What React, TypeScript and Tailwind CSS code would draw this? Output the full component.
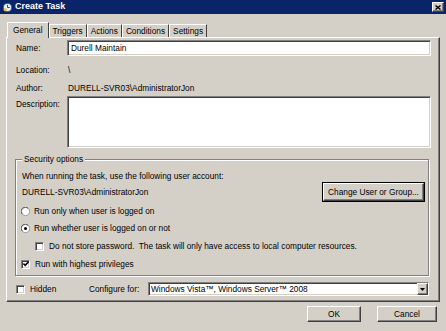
import React from "react";

const sunken =
  "border border-t-[#808080] border-l-[#808080] border-b-white border-r-white shadow-[inset_1px_1px_0_#404040,inset_-1px_-1px_0_#d4d0c8]";
const raised =
  "border border-t-white border-l-white border-b-[#404040] border-r-[#404040] shadow-[inset_-1px_-1px_0_#808080]";

function Radio({ checked }: { checked?: boolean }) {
  return (
    <svg width="9" height="9" viewBox="0 0 12 12" className="shrink-0">
      <circle cx="6" cy="6" r="5.5" fill="#fff" stroke="#808080" />
      <path d="M1.8 9.5 A5 5 0 0 1 9.5 1.8" fill="none" stroke="#404040" />
      {checked && <circle cx="6" cy="6" r="2" fill="#000" />}
    </svg>
  );
}

function Check({ checked }: { checked?: boolean }) {
  return (
    <div className={`w-[9px] h-[9px] bg-white shrink-0 flex items-center justify-center ${sunken}`}>
      {checked && (
        <svg width="6" height="6" viewBox="0 0 7 7">
          <path d="M0.5 3 L2.5 5 L6.5 1" fill="none" stroke="#000" strokeWidth="1.8" />
        </svg>
      )}
    </div>
  );
}

function Tab({ label, active }: { label: string; active?: boolean }) {
  return (
    <div
      className={
        active
          ? "h-[16px] px-[5px] -mb-px relative z-10 bg-[#d4d0c8] border border-b-0 border-t-white border-l-white border-r-[#404040] flex items-center"
          : "h-[13px] px-[3px] bg-[#d4d0c8] border border-b-0 border-t-white border-l-white border-r-[#404040] flex items-center"
      }
    >
      {label}
    </div>
  );
}

function Button({ children, def, className }: { children: React.ReactNode; def?: boolean; className?: string }) {
  return (
    <div className={`${def ? "outline outline-1 outline-black" : ""} ${className ?? ""}`}>
      <div className={`h-full flex items-center justify-center bg-[#d4d0c8] ${raised}`}>{children}</div>
    </div>
  );
}

export default function App() {
  return (
    <div
      className="w-[446px] h-[331px] bg-[#d4d0c8] text-black text-[8.3px] flex flex-col overflow-hidden"
      style={{ fontFamily: "'Liberation Sans', Arial, sans-serif" }}
    >
      {/* title bar */}
      <div className="h-[14px] bg-[#0a246a] flex items-center pl-[3px] pr-[2px] gap-[3px] text-white font-bold text-[9px]">
        <svg width="9" height="9" viewBox="0 0 10 10">
          <circle cx="5" cy="5" r="4.5" fill="#e8eef8" stroke="#3a5a9a" />
          <path d="M5 2 V5 H7.5" fill="none" stroke="#1a3a7a" strokeWidth="1" />
          <circle cx="2.5" cy="7.5" r="1.8" fill="#f4c020" />
        </svg>
        <span className="flex-1">Create Task</span>
        <div className={`w-[12px] h-[10px] flex items-center justify-center bg-[#d4d0c8] ${raised}`}>
          <svg width="6" height="5" viewBox="0 0 6 5">
            <path d="M0.5 0.5 L5.5 4.5 M5.5 0.5 L0.5 4.5" stroke="#000" strokeWidth="1.4" />
          </svg>
        </div>
      </div>

      <div className="pl-[6px] pt-[7px]">
        {/* tabs */}
        <div className="flex items-end h-[16px] pl-px">
          <Tab label="General" active />
          <Tab label="Triggers" />
          <Tab label="Actions" />
          <Tab label="Conditions" />
          <Tab label="Settings" />
        </div>

        {/* panel */}
        <div className="w-[434px] h-[265px] border border-t-white border-l-white border-r-[#404040] border-b-[#404040] shadow-[inset_-1px_-1px_0_#808080] pl-[9px] pr-[8px] flex flex-col">
          <div className="mt-[2px] h-[16px] flex items-center">
            <span className="w-[51px]">Name:</span>
            <div className={`flex-1 h-full bg-white flex items-center pl-[3px] ${sunken}`}>Durell Maintain</div>
          </div>
          <div className="mt-[7px] h-[14px] flex items-center">
            <span className="w-[52px]">Location:</span>
            <span>\</span>
          </div>
          <div className="mt-[4px] h-[14px] flex items-center">
            <span className="w-[52px]">Author:</span>
            <span>DURELL-SVR03\AdministratorJon</span>
          </div>
          <div className="mt-px h-[52px] flex">
            <span className="w-[51px] pt-[2px]">Description:</span>
            <div className={`flex-1 h-full bg-white ${sunken}`} />
          </div>

          {/* security options */}
          <div className="relative mt-[11px] -ml-px mr-[2px] h-[117px] border border-[#808080] shadow-[inset_1px_1px_0_#fff,1px_1px_0_#fff] pl-[6px] pr-[4px] pt-[10px] flex flex-col">
            <span className="absolute -top-[7px] left-[6px] px-[2px] bg-[#d4d0c8]">Security options</span>
            <div className="h-[13px] flex items-center">When running the task, use the following user account:</div>
            <div className="h-[18px] flex items-center justify-between">
              <span>DURELL-SVR03\AdministratorJon</span>
              <Button def className="w-[101px] h-[18px]">Change User or Group...</Button>
            </div>
            <div className="mt-[3px] h-[14px] flex items-center gap-[4px] -ml-px">
              <Radio />
              <span>Run only when user is logged on</span>
            </div>
            <div className="mt-[3px] h-[14px] flex items-center gap-[4px] -ml-px">
              <Radio checked />
              <span>Run whether user is logged on or not</span>
            </div>
            <div className="mt-[4px] h-[14px] flex items-center gap-[5px] ml-[13px]">
              <Check />
              <span>Do not store password.&nbsp; The task will only have access to local computer resources.</span>
            </div>
            <div className="mt-[4px] h-[14px] flex items-center gap-[5px] -ml-px">
              <Check checked />
              <span>Run with highest privileges</span>
            </div>
          </div>

          <div className="mt-[6px] h-[14px] flex items-center">
            <div className="flex items-center gap-[5px] w-[73px]">
              <Check />
              <span>Hidden</span>
            </div>
            <span className="w-[59px]">Configure for:</span>
            <div className={`flex-1 h-[14px] bg-white flex items-center pl-[2px] mr-[2px] ${sunken}`}>
              <span className="flex-1">Windows Vista™, Windows Server™ 2008</span>
              <div className={`w-[11px] h-full flex items-center justify-center bg-[#d4d0c8] ${raised}`}>
                <svg width="5" height="3" viewBox="0 0 5 3">
                  <path d="M0 0 H5 L2.5 3 Z" fill="#000" />
                </svg>
              </div>
            </div>
          </div>
        </div>

        {/* buttons */}
        <div className="mt-[4px] flex justify-end gap-[16px] pr-[9px]">
          <Button className="w-[54px] h-[16px]">OK</Button>
          <Button className="w-[60px] h-[16px]">Cancel</Button>
        </div>
      </div>
    </div>
  );
}
